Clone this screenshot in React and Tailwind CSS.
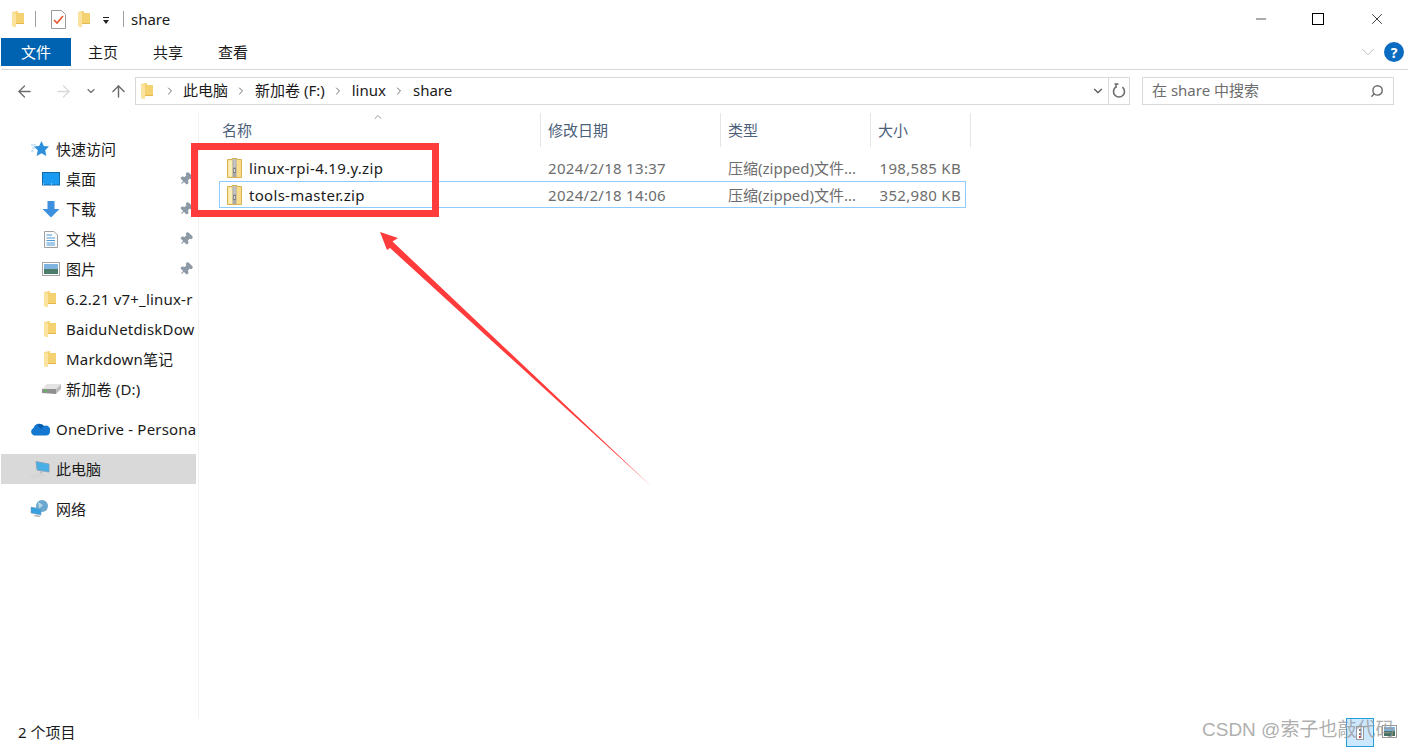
import React from "react";
import { ArrowLeft, ArrowRight, ArrowUp, ChevronDown, ChevronRight, ChevronUp, Search, Pin, Minus, X } from "lucide-react";

const FONT = { fontFamily: '"Noto Sans", "Noto Sans CJK SC", sans-serif' };

function Folder({ className = "w-[12px] h-[16px]" }) {
  return (
    <svg viewBox="0 0 12 16" className={className}>
      <path d="M0 1 L6 0 L6 2 L12 2 L12 13 L4 13 L4 16 L0 15 Z" fill="#f5d271" />
      <path d="M0 1 L4 2 L4 16 L0 15 Z" fill="#fae39f" />
      <path d="M4 13 H12 V12 H4 Z" fill="#e5b84f" />
    </svg>
  );
}

function CheckDoc() {
  return (
    <svg viewBox="0 0 15 19" className="w-[15px] h-[19px]">
      <path d="M.5.5 H10.5 L14.5 4.5 V18.5 H.5 Z" fill="#fff" stroke="#9a9a9a" />
      <path d="M3 10 L6 13 L12 6" fill="none" stroke="#e8552d" strokeWidth="1.6" />
    </svg>
  );
}

function Zip() {
  return (
    <svg viewBox="0 0 15 20" className="w-[15px] h-[20px]">
      <path d="M.5 1.5 H5 V.5 H10 V1.5 H14.5 V19.5 H.5 Z" fill="#f8dc8c" stroke="#d9b24f" />
      <path d="M1.5 2.5 H5 V18.5 H1.5 Z" fill="#fdeeb9" />
      <rect x="5.5" y="1" width="4" height="18" fill="#a9a9a9" />
      <path d="M6.5 2 H8.5 M6.5 4 H8.5 M6.5 6 H8.5 M6.5 8 H8.5" stroke="#eee" strokeWidth="0.9" />
      <rect x="6" y="10" width="3" height="5" rx="1" fill="#777" />
      <rect x="6.8" y="11" width="1.4" height="3" fill="#ddd" />
    </svg>
  );
}

function Star() {
  return (
    <svg viewBox="0 0 18 16" className="w-[18px] h-[16px]">
      <path d="M0 4 H5 M1 7 H4 M0 10 H3" stroke="#9fd0f2" strokeWidth="1" />
      <path d="M10.5 0 L12.8 5 L18 5.6 L14.2 9.2 L15.3 15 L10.5 12.2 L5.7 15 L6.8 9.2 L3 5.6 L8.2 5 Z" fill="#2b8fdc" />
    </svg>
  );
}

function Desktop() {
  return (
    <svg viewBox="0 0 18 14" className="w-[18px] h-[14px]">
      <rect x="0.5" y="0.5" width="17" height="12.5" fill="#1a9af0" stroke="#1269a8" />
      <path d="M1 12 H17" stroke="#dff1ff" strokeDasharray="1 7" />
    </svg>
  );
}

function Download() {
  return (
    <svg viewBox="0 0 18 17" className="w-[18px] h-[17px]">
      <path d="M5.5 0 H12.5 V8 H17.5 L9 16.5 L.5 8 H5.5 Z" fill="#3d90de" />
    </svg>
  );
}

function Doc() {
  return (
    <svg viewBox="0 0 14 17" className="w-[14px] h-[17px]">
      <path d="M.5.5 H10 L13.5 4 V16.5 H.5 Z" fill="#fafafa" stroke="#a0a0a0" />
      <path d="M2.5 4 H8 M2.5 7 H11 M2.5 9.5 H11 M2.5 12 H11 M2.5 14 H11" stroke="#4f9bd8" strokeWidth="1" />
    </svg>
  );
}

function Picture() {
  return (
    <svg viewBox="0 0 18 14" className="w-[18px] h-[14px]">
      <rect x="0.5" y="0.5" width="17" height="13" fill="#fff" stroke="#a5a5a5" />
      <rect x="2" y="2" width="14" height="5" fill="#7fb4e0" />
      <rect x="2" y="7" width="14" height="5" fill="#4b7d6a" />
    </svg>
  );
}

function Drive() {
  return (
    <svg viewBox="0 0 19 12" className="w-[19px] h-[12px]">
      <path d="M5 1 H19 L14 6 H0 Z" fill="#e3e3e3" />
      <path d="M0 6 H14 V11 L0 10 Z" fill="#8f8f8f" />
      <path d="M14 6 L19 1 V6 L14 11 Z" fill="#bdbdbd" />
      <rect x="2" y="7" width="3" height="1.5" fill="#4fc24f" />
    </svg>
  );
}

function Cloud() {
  return (
    <svg viewBox="0 0 20 14" className="w-[20px] h-[14px]">
      <path d="M4 13.5 A4 4 0 0 1 3.5 6 A6 6 0 0 1 14 4 A4.5 4.5 0 0 1 20 9.5 A4 4 0 0 1 16.5 13.5 Z" fill="#1478d0" />
      <path d="M7 3 A6 6 0 0 1 14 4 L11 7 Z" fill="#0a5cad" />
    </svg>
  );
}

function Pc() {
  return (
    <svg viewBox="0 0 20 17" className="w-[20px] h-[17px]">
      <path d="M6 .5 L19 3 V11 L7 9 Z" fill="#48aee6" stroke="#7d9fb8" strokeWidth="0.8" />
      <path d="M11 10 V13" stroke="#9ab" />
      <path d="M0 15 L12 12.5 M2 16.5 L15 14" stroke="#d0d0d0" strokeWidth="1" />
    </svg>
  );
}

function Net() {
  return (
    <svg viewBox="0 0 20 18" className="w-[20px] h-[18px]">
      <circle cx="12" cy="6" r="6" fill="#6aa8cf" />
      <path d="M8 2 L13 5 L9 9 Z" fill="#b6d6e8" />
      <path d="M1 7 L11 9 V15 L1 13 Z" fill="#36a0e0" stroke="#7d9fb8" strokeWidth="0.6" />
      <path d="M3 16 L9 17 L11 16 L6 15 Z" fill="#aaa" />
    </svg>
  );
}

function Refresh() {
  return (
    <svg viewBox="0 0 16 16" className="w-[16px] h-[16px]" fill="none" stroke="#6b6b6b" strokeWidth="1.6">
      <path d="M4.6 4.2 A5.5 5.5 0 1 0 11.4 4.2" />
      <path d="M3.5 1 H7.5 M5 1.2 V5" />
    </svg>
  );
}

function NavRow({ icon, label, child, active, pin, mt, latin }) {
  return (
    <div className={`flex items-center h-[30px] w-[195px] overflow-hidden whitespace-nowrap ${active ? "bg-[#d9d9d9]" : ""} ${mt ? "mt-[10px]" : ""}`}>
      <div className={`flex justify-center shrink-0 ${child ? "w-[20px] ml-[40px]" : "w-[20px] ml-[29px]"}`}>{icon}</div>
      <span className={`text-[15px] text-[#1a1a1a] ${latin ? "tracking-[0.2px]" : ""} ${child ? "ml-[5px]" : "ml-[6px]"}`}>{label}</span>
      {pin && <Pin className="absolute left-[179px] w-[14px] h-[14px] text-[#8d9aa5] fill-[#8d9aa5] rotate-45" />}
    </div>
  );
}

function FileRow({ name, date, size, selected }) {
  return (
    <div className={`flex items-center h-[27px] w-[747px] ml-[20px] border tracking-[0.3px] ${selected ? "border-[#8fcbff]" : "border-transparent"}`}>
      <div className="w-[320px] flex items-center pl-[7px]">
        <Zip />
        <span className="ml-[7px] pt-[1px] text-[15px] text-[#1a1a1a]">{name}</span>
      </div>
      <div className="w-[180px] pl-[8px] pt-[2px] text-[15px] text-[#6d6d6d]">{date}</div>
      <div className="w-[150px] pl-[8px] pt-[2px] text-[15px] tracking-normal text-[#6d6d6d]">压缩(zipped)文件...</div>
      <div className="flex-1 pr-[4px] pt-[2px] text-right text-[15px] text-[#6d6d6d]">{size}</div>
    </div>
  );
}

function HeaderCell({ label, className }) {
  return (
    <div className={`h-[34px] flex items-center text-[15px] text-[#4c607a] border-r border-[#e5e5e5] ${className}`}>{label}</div>
  );
}

function Crumb({ label }) {
  return (
    <>
      <ChevronRight className="ml-[7px] w-[12px] h-[12px] text-[#6b6b6b]" strokeWidth={2} />
      <span className="ml-[8px] pb-[2px]">{label}</span>
    </>
  );
}

export default function App() {
  return (
    <div className="relative w-[1408px] h-[748px] bg-white flex flex-col overflow-hidden" style={FONT}>
      {/* title bar */}
      <div className="h-[38px] flex items-center shrink-0">
        <div className="ml-[12px]"><Folder /></div>
        <div className="ml-[11px] w-px h-[16px] bg-[#a0a0a0]" />
        <div className="ml-[15px]"><CheckDoc /></div>
        <div className="ml-[12px]"><Folder /></div>
        <div className="ml-[12px] flex flex-col items-center gap-[2px] w-[8px] mt-[3px]">
          <div className="w-[6px] h-px bg-[#222]" />
          <div className="w-0 h-0 border-x-[3px] border-x-transparent border-t-[4px] border-t-[#222]" />
        </div>
        <div className="ml-[13px] w-px h-[16px] bg-[#a0a0a0]" />
        <span className="ml-[7px] text-[15px] text-[#1a1a1a]">share</span>
        <div className="ml-auto flex items-center">
          <Minus className="w-[16px] h-[16px] text-black" strokeWidth={1} />
          <div className="ml-[43px] w-[12px] h-[12px] border border-black" />
          <X className="ml-[44px] mr-[22px] w-[18px] h-[18px] text-black" strokeWidth={1} />
        </div>
      </div>

      {/* ribbon tabs */}
      <div className="h-[32px] flex shrink-0 ml-px border-b border-[#d9d9d9]">
        <div className="w-[70px] h-[28px] bg-[#0063b1] text-white text-[15px] flex items-center justify-center">文件</div>
        <div className="h-[28px] flex items-center ml-[17px] gap-[35px] text-[15px] text-[#1a1a1a]">
          <span>主页</span>
          <span>共享</span>
          <span>查看</span>
        </div>
        <div className="ml-auto h-[28px] flex items-center mr-[4px]">
          <ChevronDown className="w-[22px] h-[22px] text-[#b5b5b5]" strokeWidth={1} />
          <div className="ml-[5px] w-[20px] h-[20px] rounded-full bg-[#0a6cc0] text-white text-[14px] font-bold flex items-center justify-center">?</div>
        </div>
      </div>

      {/* address row */}
      <div className="h-[28px] mt-[7px] flex items-center shrink-0">
        <ArrowLeft className="ml-[15px] w-[19px] h-[19px] text-[#6b6b6b]" strokeWidth={1.6} />
        <ArrowRight className="ml-[20px] w-[19px] h-[19px] text-[#d9d9d9]" strokeWidth={1.6} />
        <ChevronDown className="ml-[12px] w-[12px] h-[12px] text-[#6b6b6b]" strokeWidth={2.2} />
        <ArrowUp className="ml-[12px] w-[19px] h-[19px] text-[#6b6b6b]" strokeWidth={1.8} />
        <div className="ml-[7px] w-[995px] h-[28px] border border-[#d9d9d9] flex items-center text-[15px] text-[#1a1a1a]">
          <div className="ml-[5px] mr-[4px]"><Folder /></div>
          <ChevronRight className="ml-[7px] w-[12px] h-[12px] text-[#6b6b6b]" strokeWidth={2} />
          <span className="ml-[7px] pb-[2px]">此电脑</span>
          <Crumb label="新加卷 (F:)" />
          <Crumb label="linux" />
          <Crumb label="share" />
          <ChevronDown className="ml-auto mr-[3px] w-[14px] h-[14px] text-[#555]" strokeWidth={2} />
          <div className="w-[21px] h-full border-l border-[#d9d9d9] flex items-center justify-center">
            <Refresh />
          </div>
        </div>
        <div className="ml-[12px] w-[252px] h-[28px] border border-[#d9d9d9] flex items-center pl-[9px] pr-[9px] text-[15px] text-[#6d6d6d]">
          <span className="pb-[2px]">在 share 中搜索</span>
          <Search className="ml-auto w-[14px] h-[14px] text-[#6b6b6b] -scale-x-100" strokeWidth={2.4} />
        </div>
      </div>

      {/* main */}
      <div className="mt-[8px] flex-1 flex min-h-0">
        <div className="relative w-[199px] shrink-0 pl-px pt-[21px] border-r border-[#f2f2f2]">
          <NavRow icon={<Star />} label="快速访问" />
          <NavRow icon={<Desktop />} label="桌面" child pin />
          <NavRow icon={<Download />} label="下载" child pin />
          <NavRow icon={<Doc />} label="文档" child pin />
          <NavRow icon={<Picture />} label="图片" child pin />
          <NavRow icon={<Folder className="w-[12px] h-[16px] -translate-x-px" />} label="6.2.21 v7+_linux-r" child latin />
          <NavRow icon={<Folder className="w-[12px] h-[16px] -translate-x-px" />} label="BaiduNetdiskDow" child latin />
          <NavRow icon={<Folder className="w-[12px] h-[16px] -translate-x-px" />} label="Markdown笔记" child latin />
          <NavRow icon={<Drive />} label="新加卷 (D:)" child latin />
          <NavRow icon={<Cloud />} label="OneDrive - Persona" mt latin />
          <NavRow icon={<Pc />} label="此电脑" active mt />
          <NavRow icon={<Net />} label="网络" mt />
        </div>
        <div className="relative flex-1">
          <ChevronUp className="absolute left-[172px] top-[-2px] w-[14px] h-[12px] text-[#6b6b6b]" strokeWidth={1.4} />
          <div className="flex">
            <HeaderCell label="名称" className="w-[342px] pl-[23px]" />
            <HeaderCell label="修改日期" className="w-[180px] pl-[7px]" />
            <HeaderCell label="类型" className="w-[150px] pl-[7px]" />
            <HeaderCell label="大小" className="w-[100px] pl-[7px]" />
          </div>
          <div className="mt-[7px]">
            <FileRow name="linux-rpi-4.19.y.zip" date="2024/2/18 13:37" size="198,585 KB" />
            <FileRow name="tools-master.zip" date="2024/2/18 14:06" size="352,980 KB" selected />
          </div>
        </div>
      </div>

      {/* status bar */}
      <div className="h-[30px] shrink-0 flex items-center pl-[18px] pb-[2px] text-[15px] text-[#1a1a1a]">
        <span>2 个项目</span>
      </div>

      {/* status view buttons */}
      <div className="absolute left-[1346px] top-[718px] w-[28px] h-[29px] bg-[#cce8ff] border border-[#26a0da] flex items-center justify-center">
        <svg viewBox="0 0 8 14" className="w-[8px] h-[14px]">
          <rect x="0.5" y="0.5" width="7" height="13" fill="#fff" stroke="#999" />
          <rect x="3" y="3" width="2" height="2" fill="#777" />
          <rect x="3" y="7" width="2" height="2" fill="#777" />
          <rect x="3" y="10" width="2" height="2" fill="#c0392b" />
        </svg>
      </div>
      <svg viewBox="0 0 15 13" className="absolute left-[1382px] top-[725px] w-[15px] h-[13px]">
        <rect x="0.5" y="0.5" width="14" height="12" fill="#fff" stroke="#999" />
        <rect x="2" y="2" width="11" height="4" fill="#7fb4e0" />
        <rect x="2" y="6" width="11" height="5" fill="#44705f" />
      </svg>

      {/* watermark */}
      <div className="absolute left-[1202px] top-[716px] text-[19px] text-[#999999]/80 whitespace-nowrap" style={{ fontFamily: '"Liberation Sans", "Noto Sans CJK SC", sans-serif' }}>CSDN @索子也敲代码</div>

      {/* red annotation */}
      <div className="absolute left-[191px] top-[143px] w-[248px] h-[74px] border-[7px] border-[#ff3b3b]" />
      <svg viewBox="0 0 1408 748" className="absolute inset-0 w-[1408px] h-[748px] pointer-events-none">
        <polygon points="380,232 398,238 392.5,241.5 651,486 390,248 387,250" fill="#ff3b3b" />
      </svg>
    </div>
  );
}
